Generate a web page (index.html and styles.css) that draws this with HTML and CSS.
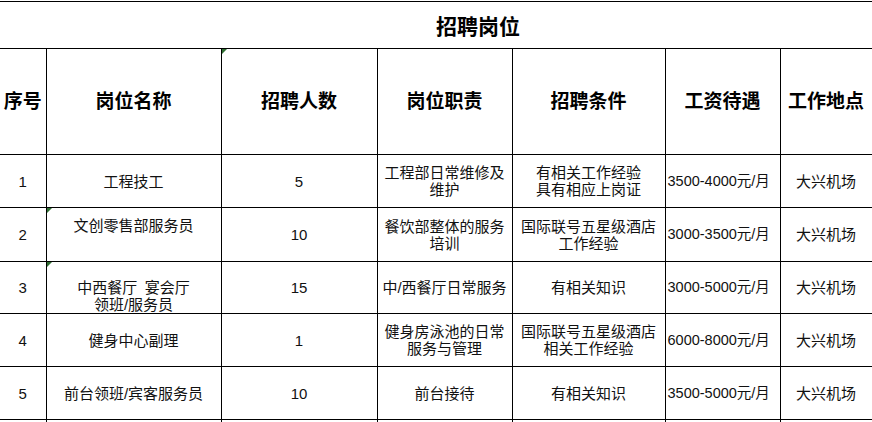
FILE: index.html
```html
<!DOCTYPE html>
<html lang="zh-CN">
<head>
<meta charset="utf-8">
<title>招聘岗位</title>
<link rel="stylesheet" href="styles.css">
</head>
<body>
<table class="sheet">
  <colgroup>
    <col class="c-no">
    <col class="c-name">
    <col class="c-count">
    <col class="c-duty">
    <col class="c-req">
    <col class="c-pay">
    <col class="c-place">
  </colgroup>
  <tr class="r-title">
    <td class="title" colspan="7">招聘岗位</td>
  </tr>
  <tr class="r-head">
    <th>序号</th>
    <th>岗位名称</th>
    <th class="flag">招聘人数</th>
    <th>岗位职责</th>
    <th>招聘条件</th>
    <th>工资待遇</th>
    <th>工作地点</th>
  </tr>
  <tr class="r-a">
    <td>1</td>
    <td>工程技工</td>
    <td>5</td>
    <td>工程部日常维修及<br>维护</td>
    <td>有相关工作经验<br>具有相应上岗证</td>
    <td class="pay">3500-4000元/月</td>
    <td>大兴机场</td>
  </tr>
  <tr class="r-b">
    <td>2</td>
    <td class="flag"><div class="up">文创零售部服务员</div></td>
    <td>10</td>
    <td>餐饮部整体的服务<br>培训</td>
    <td>国际联号五星级酒店<br>工作经验</td>
    <td class="pay">3000-3500元/月</td>
    <td>大兴机场</td>
  </tr>
  <tr class="r-c">
    <td>3</td>
    <td class="flag"><div class="down">中西餐厅&ensp;宴会厅<br>领班/服务员</div></td>
    <td>15</td>
    <td>中/西餐厅日常服务</td>
    <td>有相关知识</td>
    <td class="pay">3000-5000元/月</td>
    <td>大兴机场</td>
  </tr>
  <tr class="r-a">
    <td>4</td>
    <td>健身中心副理</td>
    <td>1</td>
    <td>健身房泳池的日常<br>服务与管理</td>
    <td>国际联号五星级酒店<br>相关工作经验</td>
    <td class="pay">6000-8000元/月</td>
    <td>大兴机场</td>
  </tr>
  <tr class="r-a">
    <td>5</td>
    <td>前台领班/宾客服务员</td>
    <td>10</td>
    <td>前台接待</td>
    <td>有相关知识</td>
    <td class="pay">3500-5000元/月</td>
    <td>大兴机场</td>
  </tr>
  <tr class="r-end">
    <td></td><td></td><td></td><td></td><td></td><td></td><td></td>
  </tr>
</table>
</body>
</html>
```

FILE: styles.css
```css
html, body {
  margin: 0;
  padding: 0;
  background: #fff;
  overflow: hidden;
}

body {
  padding-top: 1px;
  font-family: "Liberation Sans", "Noto Sans CJK SC", sans-serif;
  color: #111;
}

.sheet {
  border-collapse: collapse;
  table-layout: fixed;
  width: 872px;
}

.c-no { width: 46px; }
.c-name { width: 175px; }
.c-count { width: 156px; }
.c-duty { width: 135px; }
.c-req { width: 153px; }
.c-pay { width: 115px; }
.c-place { width: 92px; }

.sheet td,
.sheet th {
  border: 1px solid #000;
  padding: 0;
  text-align: center;
  vertical-align: middle;
  font-size: 15px;
  line-height: 17px;
  font-weight: normal;
  white-space: nowrap;
  overflow: hidden;
}

.sheet tr > :first-child {
  border-left: none;
}

.r-title { height: 47px; }
.r-head { height: 106px; }
.r-a { height: 53px; }
.r-b { height: 54px; }
.r-c { height: 52px; }

.sheet .r-end td {
  height: 2px;
  line-height: 0;
  font-size: 0;
  border-bottom: none;
}

.sheet .title {
  border-left: none;
  border-right: none;
  font-size: 21px;
  font-weight: bold;
  line-height: 24px;
  padding: 4px 0 0 84px;
  color: #000;
}

.r-head th {
  font-size: 19px;
  font-weight: bold;
  line-height: 24px;
  color: #000;
}

.sheet .pay {
  text-align: left;
  padding-left: 2px;
  font-size: 14.5px;
}

.up {
  margin-top: -9px;
  margin-bottom: 9px;
}

.down {
  margin-top: 8px;
  margin-bottom: -8px;
  line-height: 17px;
}

.sheet .flag {
  position: relative;
}

.sheet .flag::before {
  content: "";
  position: absolute;
  left: 0;
  top: 0;
  width: 0;
  height: 0;
  border-top: 5px solid #2f6e32;
  border-right: 5px solid transparent;
}
```
